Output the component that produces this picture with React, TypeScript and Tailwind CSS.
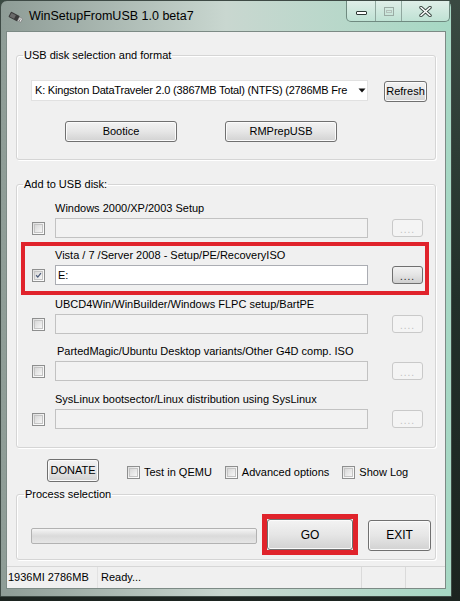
import React from "react";

const ui = { fontFamily: '"Liberation Sans", Arial, sans-serif' };

function Check({ checked = false, className = "" }: { checked?: boolean; className?: string }) {
  return (
    <span
      className={`flex h-[13px] w-[13px] shrink-0 items-center justify-center border border-[#8e8f8f] bg-gradient-to-br from-[#dcdcdc] via-[#f4f4f4] to-[#ffffff] ${className}`}
    >
      <span className="flex h-[9px] w-[9px] items-center justify-center border border-[#c4c4c4] bg-gradient-to-br from-[#d8d8d8] to-[#f6f6f6]">
        {checked && (
          <svg width="9" height="9" viewBox="0 0 9 9">
            <path d="M1.5 4.2 L3.6 6.6 L7.6 1.4" fill="none" stroke="#4a5a78" strokeWidth="1.6" />
          </svg>
        )}
      </span>
    </span>
  );
}

function Btn({ children, className = "" }: { children: React.ReactNode; className?: string }) {
  return (
    <div
      className={`flex items-center justify-center rounded-[3px] border border-[#707070] bg-gradient-to-b from-[#f3f3f3] via-[#e6e6e6] to-[#d2d2d2] text-[11px] text-black shadow-[inset_0_0_0_1px_#fbfbfb] ${className}`}
    >
      {children}
    </div>
  );
}

function Dots({ enabled }: { enabled: boolean }) {
  return enabled ? (
    <div className="flex h-[18px] w-[31px] items-center justify-center rounded-[3px] border border-[#707070] bg-gradient-to-b from-[#f2f2f2] via-[#e4e4e4] to-[#cfcfcf] pt-[3px] text-[10px] leading-none tracking-[1px] text-[#222]">
      ....
    </div>
  ) : (
    <div className="flex h-[18px] w-[31px] items-center justify-center rounded-[3px] border border-[#c9c9c9] bg-[#f4f4f4] pt-[3px] text-[10px] leading-none tracking-[1px] text-[#c0c0c0]">
      ....
    </div>
  );
}

function SourceRow({
  label,
  value = "",
  active = false,
  labelIndent = 38,
}: {
  label: string;
  value?: string;
  active?: boolean;
  labelIndent?: number;
}) {
  return (
    <div className="flex flex-col">
      <div className="h-[14px] text-[11px] leading-[14px] text-black" style={{ paddingLeft: labelIndent }}>
        {label}
      </div>
      <div className="mt-[3px] flex items-center">
        <Check checked={active} className="ml-[15px]" />
        <div
          className={`ml-[10px] flex h-[20px] w-[313px] items-center border px-[2px] text-[11px] ${
            active ? "border-[#abadb3] bg-white" : "border-[#c2c2c2] bg-[#f2f2f2]"
          }`}
        >
          {value}
        </div>
        <div className="ml-[24px]">
          <Dots enabled={active} />
        </div>
      </div>
    </div>
  );
}

function UsbIcon() {
  return (
    <svg width="16" height="14" viewBox="0 0 16 14">
      <g transform="rotate(28 8 7)">
        <rect x="2" y="4" width="10" height="6" rx="1" fill="#3b3b3b" />
        <rect x="3" y="5" width="5" height="4" fill="#6a6a6a" />
        <rect x="12" y="5" width="3.5" height="4" fill="#e9e9e9" stroke="#777" strokeWidth="0.6" />
        <rect x="13" y="6" width="1" height="0.8" fill="#555" />
        <rect x="13" y="7.4" width="1" height="0.8" fill="#555" />
      </g>
    </svg>
  );
}

export default function App() {
  return (
    <div
      className="relative h-[601px] w-[460px] overflow-hidden bg-gradient-to-b from-[#3a4a42] via-[#22302a] to-[#1c2420]"
      style={ui}
    >
      {/* window frame */}
      <div className="flex h-[597px] w-[452px] flex-col rounded-tl-[7px] rounded-tr-[7px] border border-[#3e4a45] bg-gradient-to-r from-[#8e9c96] via-[#c9d7d0] to-[#a6d8c4]">
        {/* title bar */}
        <div className="flex h-[30px] shrink-0 items-start">
          <div className="ml-[6px] mt-[9px]">
            <UsbIcon />
          </div>
          <div className="ml-[6px] mt-[8px] text-[12.5px] leading-[15px] text-black">WinSetupFromUSB 1.0 beta7</div>
          <div className="ml-auto mr-[1px] flex h-[21px] overflow-hidden rounded-b-[5px] border border-t-0 border-[#6f8a80] bg-gradient-to-b from-[#dfeee8] to-[#bfe2d4]">
            <div className="flex w-[29px] items-center justify-center border-r border-[#8fa79e]">
              <span className="mt-[3px] h-[4px] w-[11px] rounded-[1px] border border-[#2f3a36] bg-white" />
            </div>
            <div className="flex w-[26px] items-center justify-center border-r border-[#8fa79e]">
              <span className="flex h-[9px] w-[10px] items-center justify-center border border-[#9aaba4]">
                <span className="h-[3px] w-[6px] border border-[#b3c1bb]" />
              </span>
            </div>
            <div className="flex w-[47px] items-center justify-center">
              <svg width="13" height="11" viewBox="0 0 13 11">
                <path d="M2 1.5 L11 9.5 M11 1.5 L2 9.5" stroke="#3a4742" strokeWidth="3.4" strokeLinecap="round" />
                <path d="M2 1.5 L11 9.5 M11 1.5 L2 9.5" stroke="#ffffff" strokeWidth="1.6" strokeLinecap="round" />
              </svg>
            </div>
          </div>
        </div>

        {/* client area */}
        <div className="mx-[5px] flex flex-1 flex-col border border-[#7c8a85] bg-[#f0f0f0]">
          <div className="flex flex-col px-[9px] pt-[16px]">
            {/* USB disk selection */}
            <fieldset className="h-[112px] rounded-[3px] border border-[#d5d5d5] shadow-[inset_1px_1px_0_#ffffff,1px_1px_0_#ffffff]">
              <legend className="ml-[6px] px-[1px] text-[11px] leading-[14px] text-black">USB disk selection and format</legend>
              <div className="mt-[18px] flex items-start">
                <div className="ml-[14px] flex h-[21px] w-[337px] items-center border border-[#e1e1e1] bg-white pl-[3px] text-[11px]">
                  <span className="w-[321px] whitespace-nowrap tracking-[-0.2px]">
                    K: Kingston DataTraveler 2.0 (3867MB Total) (NTFS) (2786MB Fre
                  </span>
                  <svg className="ml-[2px]" width="8" height="5" viewBox="0 0 8 5">
                    <path d="M0.5 0.5 L7.5 0.5 L4 4.5 Z" fill="#111" />
                  </svg>
                </div>
                <Btn className="ml-[16px] mt-[1px] h-[21px] w-[43px]">Refresh</Btn>
              </div>
              <div className="mt-[19px] flex">
                <Btn className="ml-[48px] h-[21px] w-[112px]">Bootice</Btn>
                <Btn className="ml-[48px] h-[21px] w-[112px]">RMPrepUSB</Btn>
              </div>
            </fieldset>

            {/* sources */}
            <fieldset className="mt-[17px] h-[271px] rounded-[3px] border border-[#d5d5d5] shadow-[inset_1px_1px_0_#ffffff,1px_1px_0_#ffffff]">
              <legend className="ml-[6px] px-[1px] text-[11px] leading-[14px] text-black">Add to USB disk:</legend>
              <div className="mt-[10px] flex flex-col">
                <SourceRow label="Windows 2000/XP/2003 Setup" />
                <div className="relative mt-[10px]">
                  <div className="pointer-events-none absolute left-[4px] top-[-6px] h-[53px] w-[408px] border-[4px] border-[#e0232b]" />
                  <SourceRow label="Vista / 7 /Server 2008 - Setup/PE/RecoveryISO" value="E:" active />
                </div>
                <div className="mt-[12px]">
                  <SourceRow label="UBCD4Win/WinBuilder/Windows FLPC setup/BartPE" />
                </div>
                <div className="mt-[10px]">
                  <SourceRow label="PartedMagic/Ubuntu Desktop variants/Other G4D comp. ISO" labelIndent={40} />
                </div>
                <div className="mt-[11px]">
                  <SourceRow label="SysLinux bootsector/Linux distribution using SysLinux" />
                </div>
              </div>
            </fieldset>

            {/* options row */}
            <div className="mt-[11px] flex h-[23px] items-center">
              <Btn className="ml-[31px] h-[23px] w-[52px] rounded-[3px]">DONATE</Btn>
              <Check className="ml-[28px] mt-[4px]" />
              <span className="ml-[4px] mt-[4px] text-[11px]">Test in QEMU</span>
              <Check className="ml-[13px] mt-[4px]" />
              <span className="ml-[4px] mt-[4px] text-[11px]">Advanced options</span>
              <Check className="ml-[13px] mt-[4px]" />
              <span className="ml-[4px] mt-[4px] text-[11px]">Show Log</span>
            </div>

            {/* process */}
            <fieldset className="mt-[5px] h-[73px] rounded-[3px] border border-[#d5d5d5] shadow-[inset_1px_1px_0_#ffffff,1px_1px_0_#ffffff]">
              <legend className="ml-[7px] px-[1px] text-[11px] leading-[14px] text-black">Process selection</legend>
              <div className="mt-[13px] flex items-center">
                <div className="ml-[14px] mt-[3px] h-[16px] w-[226px] rounded-[2px] border border-[#b2b2b2] bg-gradient-to-b from-[#f5f5f5] via-[#dadada] to-[#e6e6e6]" />
                <div className="ml-[5px] border-[5px] border-[#e0232b]">
                  <Btn className="h-[31px] w-[86px] text-[12px]">GO</Btn>
                </div>
                <Btn className="ml-[10px] mt-[1px] h-[31px] w-[63px] text-[12px]">EXIT</Btn>
              </div>
            </fieldset>
          </div>

          {/* status bar */}
          <div className="mt-auto flex h-[22px] border-t border-[#d7d7d7] bg-[#f0f0f0] text-[11px] leading-[21px]">
            <div className="w-[90px] pl-[1px]">1936MI 2786MB</div>
            <div className="flex-1 border-l border-[#e2e2e2] pl-[3px]">Ready...</div>
            <div className="w-[44px] border-l border-[#dadada]" />
            <div className="w-[40px] border-l border-[#dadada]" />
          </div>
        </div>
        <div className="h-[7px] shrink-0" />
      </div>
    </div>
  );
}
